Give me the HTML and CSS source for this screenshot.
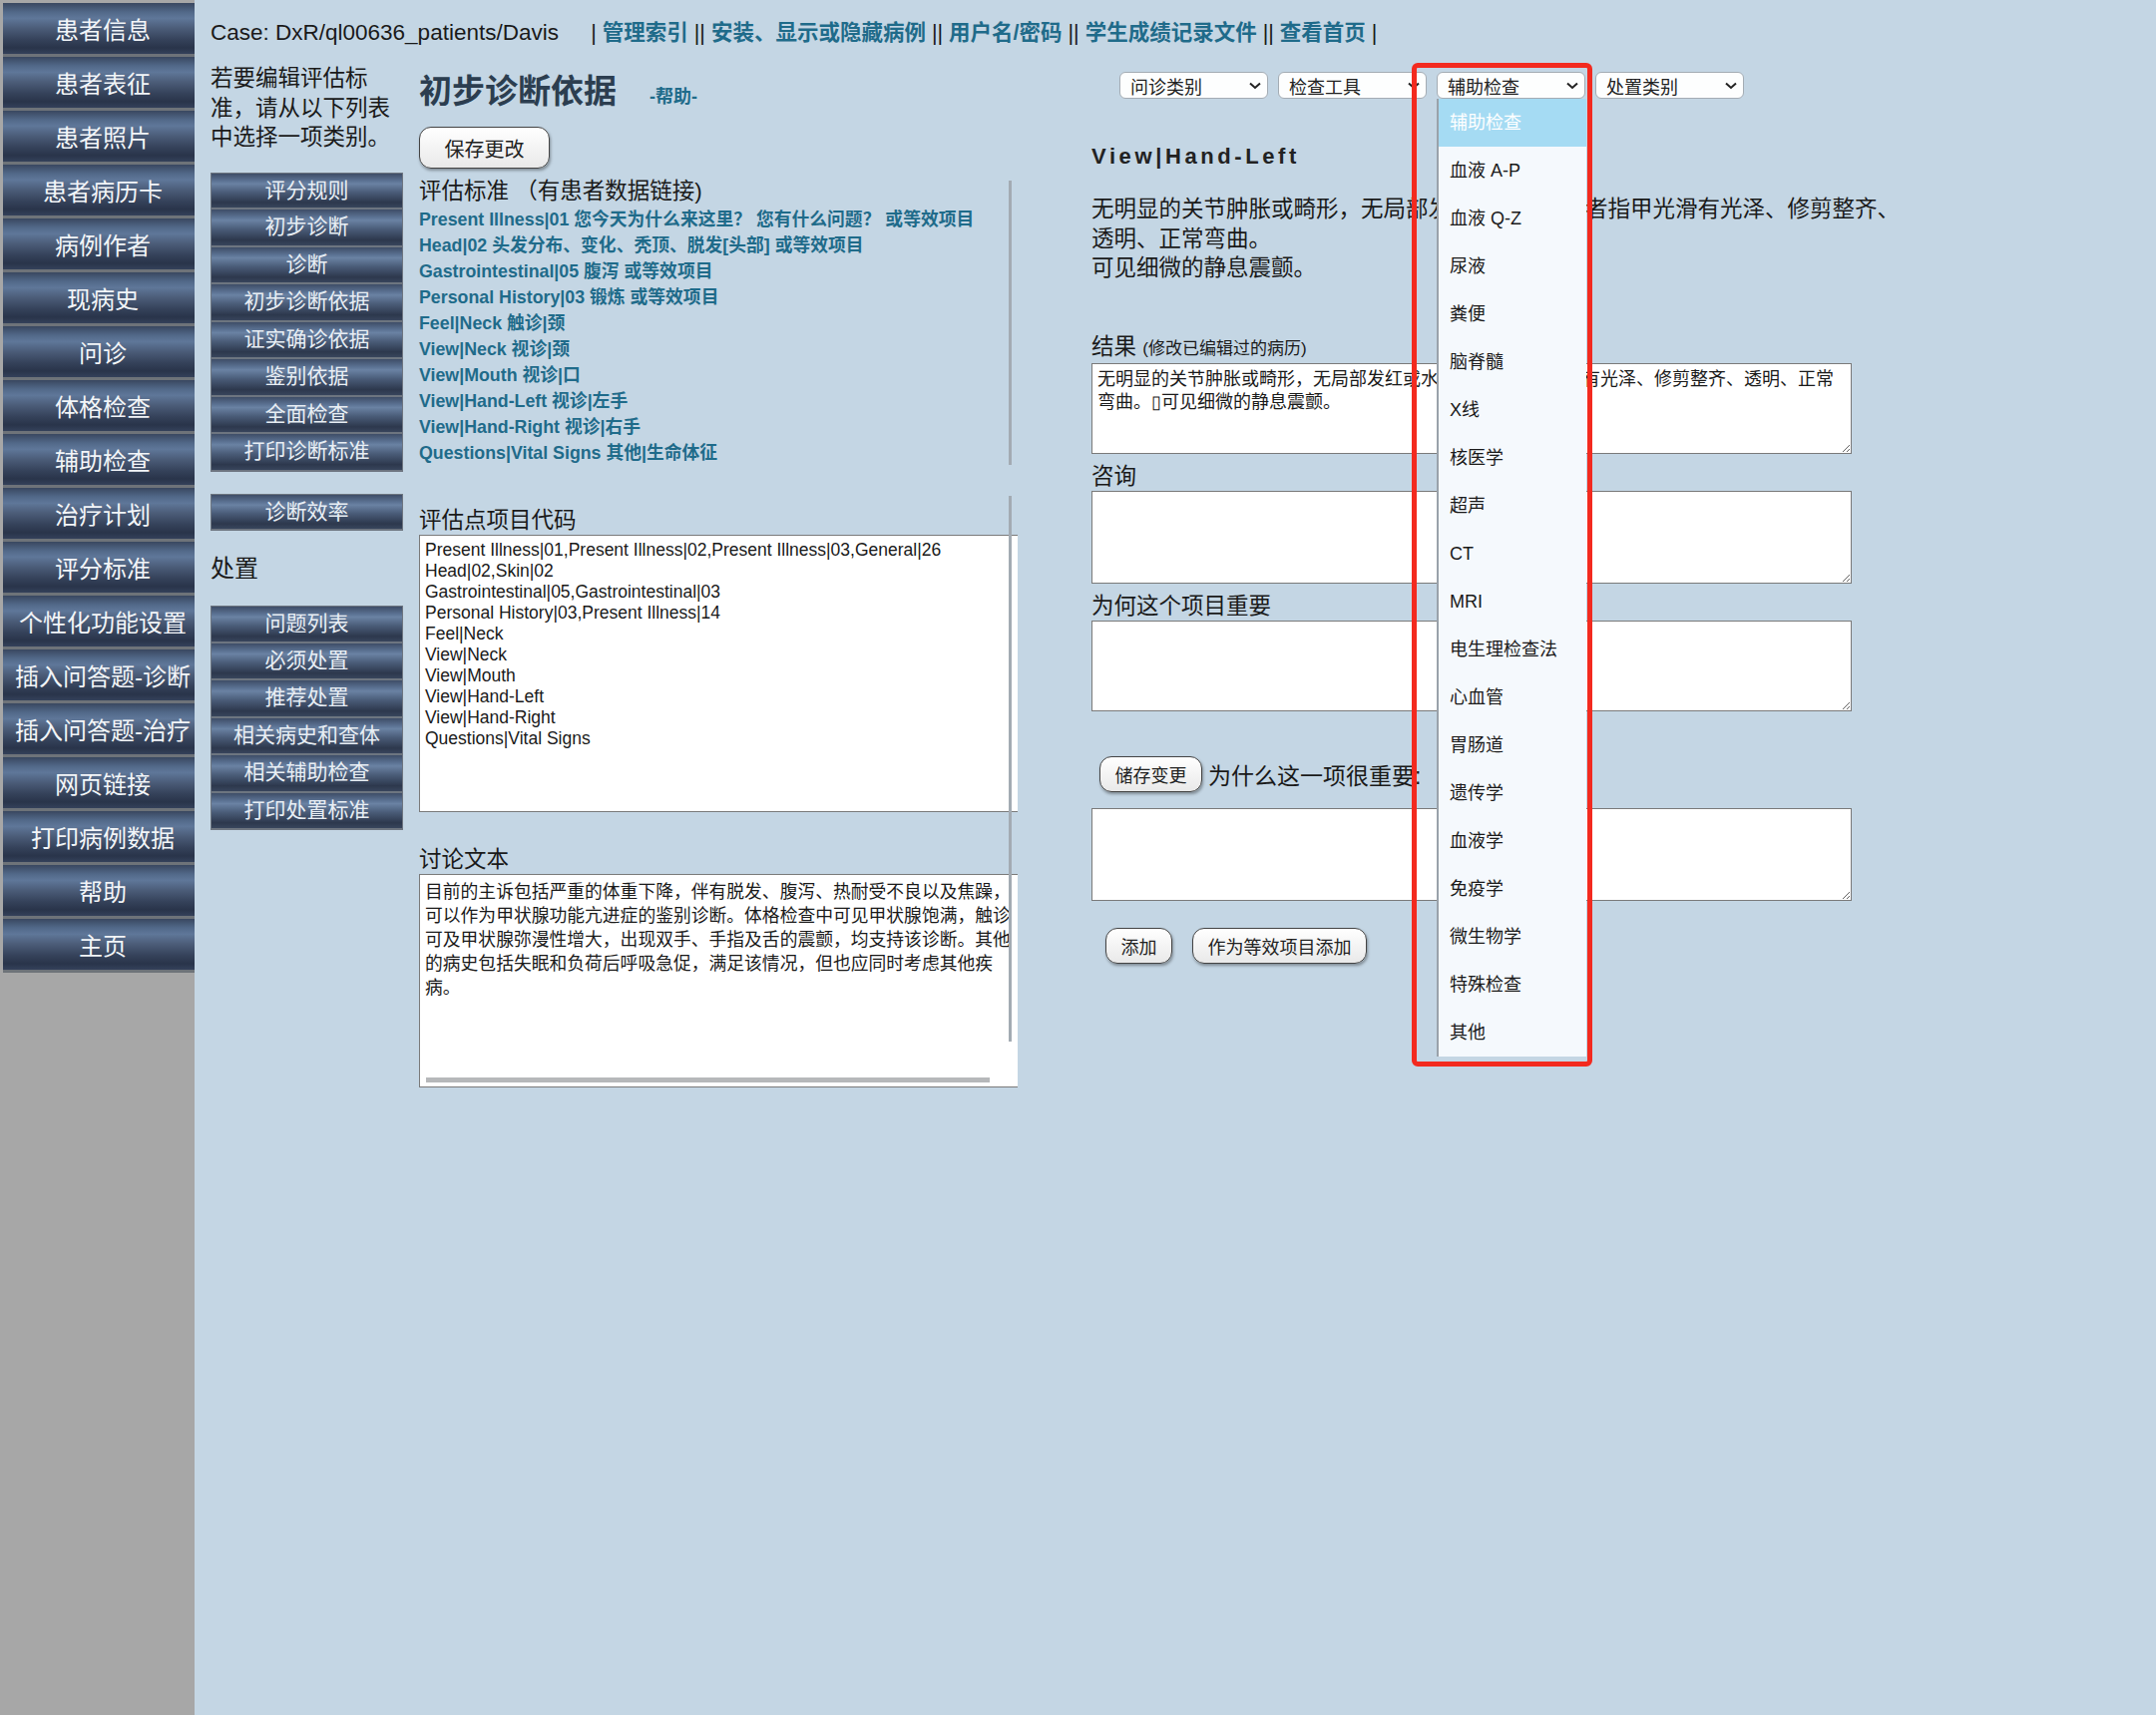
FILE: index.html
```html
<!DOCTYPE html>
<html lang="zh-CN">
<head>
    <meta charset="UTF-8">
    <meta name="viewport" content="width=device-width, initial-scale=1.0">
    <title>初步诊断依据</title>
    <link rel="stylesheet" href="styles.css">
</head>
<body>
<div class="page">

    <div class="sidebar">
        <div class="side-item">患者信息</div>
        <div class="side-item">患者表征</div>
        <div class="side-item">患者照片</div>
        <div class="side-item">患者病历卡</div>
        <div class="side-item">病例作者</div>
        <div class="side-item">现病史</div>
        <div class="side-item">问诊</div>
        <div class="side-item">体格检查</div>
        <div class="side-item">辅助检查</div>
        <div class="side-item">治疗计划</div>
        <div class="side-item">评分标准</div>
        <div class="side-item">个性化功能设置</div>
        <div class="side-item">插入问答题-诊断</div>
        <div class="side-item">插入问答题-治疗</div>
        <div class="side-item">网页链接</div>
        <div class="side-item">打印病例数据</div>
        <div class="side-item">帮助</div>
        <div class="side-item">主页</div>
    </div>

    <div class="content">
        <div class="topbar">
            <span class="case">Case: DxR/ql00636_patients/Davis</span>
            <span class="links">| <a href="#">管理索引</a> || <a href="#">安装、显示或隐藏病例</a> || <a href="#">用户名/密码</a> || <a href="#">学生成绩记录文件</a> || <a href="#">查看首页</a> |</span>
        </div>

        <div class="columns">
            <!-- left: category buttons -->
            <div class="col-left">
                <p class="intro">若要编辑评估标准，请从以下列表中选择一项类别。</p>
                <div class="subnav">
                    <div class="sub-btn">评分规则</div>
                    <div class="sub-btn">初步诊断</div>
                    <div class="sub-btn">诊断</div>
                    <div class="sub-btn">初步诊断依据</div>
                    <div class="sub-btn">证实确诊依据</div>
                    <div class="sub-btn">鉴别依据</div>
                    <div class="sub-btn">全面检查</div>
                    <div class="sub-btn">打印诊断标准</div>
                </div>
                <div class="subnav subnav-single">
                    <div class="sub-btn">诊断效率</div>
                </div>
                <div class="group-label">处置</div>
                <div class="subnav subnav-last">
                    <div class="sub-btn">问题列表</div>
                    <div class="sub-btn">必须处置</div>
                    <div class="sub-btn">推荐处置</div>
                    <div class="sub-btn">相关病史和查体</div>
                    <div class="sub-btn">相关辅助检查</div>
                    <div class="sub-btn">打印处置标准</div>
                </div>
            </div>

            <!-- middle: criteria -->
            <div class="col-main">
                <div class="title-row">
                    <span class="title">初步诊断依据</span><span class="help">-帮助-</span>
                </div>
                <button class="save-btn">保存更改</button>

                <div class="crit-box">
                    <div class="crit-head">评估标准 （有患者数据链接)</div>
                    <div class="crit-list">
                        <a href="#">Present Illness|01 您今天为什么来这里？ 您有什么问题？ 或等效项目</a>
                        <a href="#">Head|02 头发分布、变化、秃顶、脱发[头部] 或等效项目</a>
                        <a href="#">Gastrointestinal|05 腹泻 或等效项目</a>
                        <a href="#">Personal History|03 锻炼 或等效项目</a>
                        <a href="#">Feel|Neck 触诊|颈</a>
                        <a href="#">View|Neck 视诊|颈</a>
                        <a href="#">View|Mouth 视诊|口</a>
                        <a href="#">View|Hand-Left 视诊|左手</a>
                        <a href="#">View|Hand-Right 视诊|右手</a>
                        <a href="#">Questions|Vital Signs 其他|生命体征</a>
                    </div>
                </div>

                <div class="codes-box">
                    <div class="field-label">评估点项目代码</div>
                    <textarea class="codes">Present Illness|01,Present Illness|02,Present Illness|03,General|26
Head|02,Skin|02
Gastrointestinal|05,Gastrointestinal|03
Personal History|03,Present Illness|14
Feel|Neck
View|Neck
View|Mouth
View|Hand-Left
View|Hand-Right
Questions|Vital Signs</textarea>
                    <div class="field-label disc-label">讨论文本</div>
                    <textarea class="discussion">目前的主诉包括严重的体重下降，伴有脱发、腹泻、热耐受不良以及焦躁，可以作为甲状腺功能亢进症的鉴别诊断。体格检查中可见甲状腺饱满，触诊可及甲状腺弥漫性增大，出现双手、手指及舌的震颤，均支持该诊断。其他的病史包括失眠和负荷后呼吸急促，满足该情况，但也应同时考虑其他疾病。</textarea>
                </div>
            </div>

            <!-- right: item detail -->
            <div class="col-right">
                <div class="selects">
                    <div class="select-wrap">
                        <div class="fake-select"><span>问诊类别</span><svg width="12" height="8" viewBox="0 0 12 8"><polyline points="1,1.5 6,6 11,1.5" fill="none" stroke="#222" stroke-width="2"/></svg></div>
                    </div>
                    <div class="select-wrap">
                        <div class="fake-select"><span>检查工具</span><svg width="12" height="8" viewBox="0 0 12 8"><polyline points="1,1.5 6,6 11,1.5" fill="none" stroke="#222" stroke-width="2"/></svg></div>
                    </div>
                    <div class="select-wrap">
                        <div class="fake-select"><span>辅助检查</span><svg width="12" height="8" viewBox="0 0 12 8"><polyline points="1,1.5 6,6 11,1.5" fill="none" stroke="#222" stroke-width="2"/></svg></div>
                        <div class="dropdown">
                            <div class="option active">辅助检查</div>
                            <div class="option">血液 A-P</div>
                            <div class="option">血液 Q-Z</div>
                            <div class="option">尿液</div>
                            <div class="option">粪便</div>
                            <div class="option">脑脊髓</div>
                            <div class="option">X线</div>
                            <div class="option">核医学</div>
                            <div class="option">超声</div>
                            <div class="option">CT</div>
                            <div class="option">MRI</div>
                            <div class="option">电生理检查法</div>
                            <div class="option">心血管</div>
                            <div class="option">胃肠道</div>
                            <div class="option">遗传学</div>
                            <div class="option">血液学</div>
                            <div class="option">免疫学</div>
                            <div class="option">微生物学</div>
                            <div class="option">特殊检查</div>
                            <div class="option">其他</div>
                        </div>
                        <div class="marker"></div>
                    </div>
                    <div class="select-wrap">
                        <div class="fake-select"><span>处置类别</span><svg width="12" height="8" viewBox="0 0 12 8"><polyline points="1,1.5 6,6 11,1.5" fill="none" stroke="#222" stroke-width="2"/></svg></div>
                    </div>
                </div>

                <div class="view-title">View|Hand-Left</div>
                <p class="finding">无明显的关节肿胀或畸形，无局部发红或水肿，患者指甲光滑有光泽、修剪整齐、透明、正常弯曲。<br>可见细微的静息震颤。</p>

                <div class="field-label result-label">结果 <span class="small">(修改已编辑过的病历)</span></div>
                <textarea class="note-area">无明显的关节肿胀或畸形，无局部发红或水肿。患者指甲光滑有光泽、修剪整齐、透明、正常弯曲。▯可见细微的静息震颤。</textarea>

                <div class="field-label near-label">咨询</div>
                <textarea class="note-area tall"></textarea>

                <div class="field-label near-label">为何这个项目重要</div>
                <textarea class="note-area"></textarea>

                <div class="why-row">
                    <button class="pill-btn">储存变更</button>
                    <span class="why-text">为什么这一项很重要:</span>
                </div>
                <textarea class="note-area why-area"></textarea>

                <div class="add-row">
                    <button class="pill-btn">添加</button>
                    <button class="pill-btn">作为等效项目添加</button>
                </div>
            </div>
        </div>
    </div>

</div>
</body>
</html>
```

FILE: styles.css
```css
* {
    box-sizing: border-box;
}
body {
    margin: 0;
    font-family: "Liberation Sans", "Noto Sans CJK SC", sans-serif;
    font-size: 22.5px;
    color: #1a1a1a;
    background-color: #c4d6e4;
}
.page {
    display: flex;
    height: 1719px;
    overflow: hidden;
}

/* left menu */
.sidebar {
    width: 195px;
    flex-shrink: 0;
    background-color: #a7a7a7;
    padding: 3px 0 0 3px;
}
.side-item {
    height: 54px;
    line-height: 55px;
    padding-left: 8px;
    border-bottom: 3px solid #6e7379;
    background: linear-gradient(to bottom, #394760 0%, #526989 18%, #5f7799 30%, #4b5c78 50%, #35425a 72%, #29344a 88%, #34415a 100%);
    color: #f2f5f8;
    font-size: 24px;
    text-align: center;
    white-space: nowrap;
}

.content {
    flex: 1;
    padding-left: 16px;
}
.topbar {
    padding-top: 18px;
    line-height: 30px;
    white-space: nowrap;
}
.case {
    margin-right: 26px;
}
.links {
    font-size: 21.5px;
}
.links a {
    color: #1f6b8a;
    font-weight: bold;
    text-decoration: none;
}

.columns {
    display: flex;
    align-items: flex-start;
    margin-top: 16px;
}
.col-left {
    width: 193px;
    margin-right: 16px;
    flex-shrink: 0;
}
.col-main {
    width: 600px;
    margin-right: 74px;
    flex-shrink: 0;
}
.col-right {
    width: 822px;
    padding-top: 8px;
    flex-shrink: 0;
}

/* category buttons */
.intro {
    margin: 0;
    line-height: 29.5px;
}
.subnav {
    margin-top: 20px;
}
.subnav-single {
    margin-top: 22px;
}
.subnav-last {
    margin-top: 22px;
}
.sub-btn {
    height: 37.5px;
    line-height: 34.5px;
    border: 1px solid #6d7580;
    border-bottom-width: 2px;
    background: linear-gradient(to bottom, #3e4d67 0%, #5c7394 22%, #6a82a3 30%, #4a5c78 55%, #2d384d 85%, #38455c 100%);
    color: #e8eef4;
    font-size: 21px;
    text-align: center;
    white-space: nowrap;
}
.sub-btn + .sub-btn {
    border-top: none;
}
.group-label {
    margin-top: 23px;
    line-height: 30px;
    font-size: 24px;
}

/* middle column */
.title-row {
    height: 40px;
    margin-top: 6px;
    line-height: 44px;
    white-space: nowrap;
}
.title {
    font-size: 33px;
    font-weight: bold;
    color: #2c3e50;
}
.help {
    margin-left: 33px;
    font-size: 18px;
    font-weight: bold;
    color: #1f6b8a;
}
.save-btn {
    display: block;
    margin-top: 17px;
    width: 131px;
    height: 42px;
    font-family: inherit;
    font-size: 20px;
    color: #222;
    border: 1.5px solid #444;
    border-radius: 12px;
    background: linear-gradient(to bottom, #ffffff, #e9e9e9);
    box-shadow: 1px 2px 3px rgba(0, 0, 0, 0.35);
}
.crit-box {
    position: relative;
    margin-top: 10px;
}
.crit-box::after {
    content: "";
    position: absolute;
    right: 6px;
    top: 2px;
    bottom: 1px;
    width: 3px;
    background-color: #a3abb3;
}
.crit-head {
    line-height: 26px;
}
.crit-list {
    margin-top: 2px;
    font-size: 17.8px;
    line-height: 26px;
}
.crit-list a {
    display: block;
    color: #1f6b8a;
    font-weight: bold;
    text-decoration: none;
    white-space: nowrap;
}
.codes-box {
    position: relative;
    margin-top: 30px;
    padding-top: 11px;
    overflow: hidden;
}
.codes-box::after {
    content: "";
    position: absolute;
    right: 6px;
    top: 0;
    width: 3px;
    height: 547px;
    background-color: #a3abb3;
}
.codes-box::before {
    content: "";
    position: absolute;
    left: 7px;
    top: 583px;
    width: 565px;
    height: 5px;
    background-color: #b6b8ba;
    z-index: 1;
}
.field-label {
    line-height: 28px;
    white-space: nowrap;
}
.disc-label {
    margin-top: 34px;
}
textarea {
    display: block;
    font-family: "Liberation Sans", "Noto Sans CJK SC", sans-serif;
    color: #1a1a1a;
    background-color: #ffffff;
    border: 1.5px solid #7a7a7a;
    border-radius: 0;
    overflow: hidden;
}
.codes {
    width: 640px;
    height: 278px;
    padding: 4px 5px;
    font-size: 17.5px;
    line-height: 21px;
    resize: none;
}
.discussion {
    width: 613px;
    height: 214px;
    padding: 5px 5px;
    font-size: 17.8px;
    line-height: 24px;
    resize: none;
}

/* right column */
.selects {
    display: flex;
    gap: 10px;
    margin-left: 28px;
}
.select-wrap {
    position: relative;
    width: 149px;
}
.fake-select {
    display: flex;
    align-items: center;
    justify-content: space-between;
    height: 27px;
    padding: 0 6px 0 10px;
    font-size: 18px;
    color: #222;
    background-color: #fdfefe;
    border: 1px solid #a4acb4;
    border-radius: 6px;
}
.dropdown {
    position: absolute;
    top: 27px;
    left: 0;
    width: 150px;
    background-color: #f5f9fd;
    border-left: 2px solid #9aa2aa;
    z-index: 2;
}
.option {
    height: 48px;
    line-height: 48px;
    padding-left: 11px;
    font-size: 18px;
    color: #1a1a1a;
    white-space: nowrap;
}
.option.active {
    background-color: #a5dbf3;
    color: #ffffff;
}
.marker {
    position: absolute;
    left: -25px;
    top: -9px;
    width: 181px;
    height: 1006px;
    border: 5px solid #f32a1f;
    border-radius: 6px;
    z-index: 3;
}
.view-title {
    margin-top: 43px;
    line-height: 30px;
    font-size: 22px;
    font-weight: bold;
    letter-spacing: 3.6px;
    color: #222;
}
.finding {
    width: 820px;
    margin: 23px 0 0;
    line-height: 29.5px;
}
.result-label {
    margin-top: 50px;
}
.small {
    font-size: 17px;
}
.near-label {
    margin-top: 9px;
}
.note-area {
    width: 762px;
    height: 91px;
    padding: 4px 5px;
    font-size: 18px;
    line-height: 23px;
    resize: vertical;
}
.note-area.tall {
    height: 93px;
}
.why-row {
    display: flex;
    align-items: center;
    margin-top: 45px;
    padding-left: 8px;
}
.why-text {
    margin-left: 6px;
    font-size: 23px;
    white-space: nowrap;
}
.why-area {
    margin-top: 16px;
    height: 93px;
}
.pill-btn {
    height: 36px;
    padding: 0 14.5px;
    font-family: inherit;
    font-size: 18px;
    color: #222;
    border: 1.5px solid #444;
    border-radius: 12px;
    background: linear-gradient(to bottom, #ffffff, #e9e9e9);
    box-shadow: 1px 2px 3px rgba(0, 0, 0, 0.35);
    white-space: nowrap;
}
.add-row {
    display: flex;
    gap: 20px;
    margin-top: 27px;
    padding-left: 14px;
}
```
